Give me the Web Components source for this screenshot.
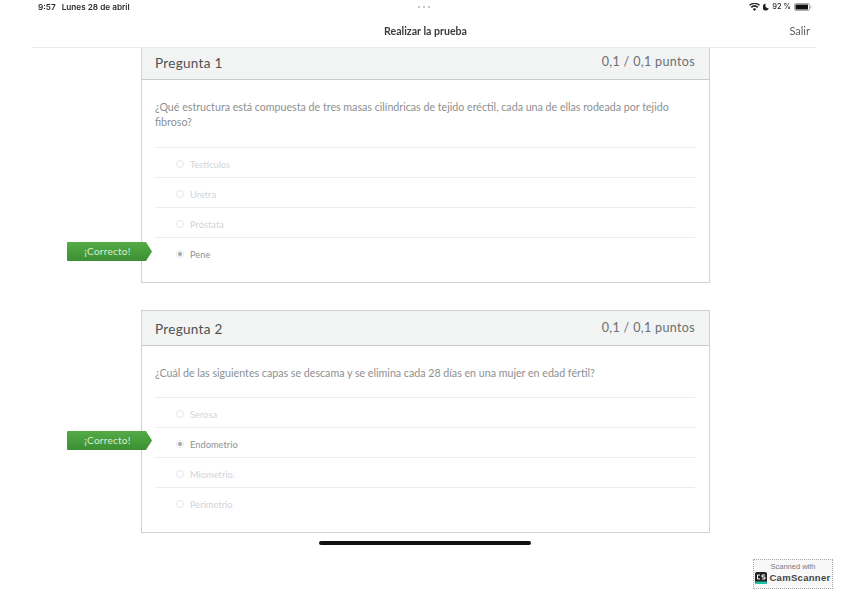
<!DOCTYPE html>
<html lang="es">
<head>
<meta charset="utf-8">
<title>Realizar la prueba</title>
<style>
  html, body { margin: 0; background: #fff; }
  body { width: 848px; height: 599px; overflow: hidden; position: relative; font-family: Lato, "Liberation Sans", sans-serif; }
</style>
</head>
<body>
<quiz-app></quiz-app>

<template id="status-tpl">
  <style>
    :host { display: flex; align-items: center; height: 13px; margin-bottom: 1px; padding: 0 36px 0 38px; font: 600 8.200px/12px Inter, "Liberation Sans", sans-serif; color: #2a2a2a; position: relative; }
    .date { margin-left: 6px; }
    .dots { position: absolute; left: 418px; top: 6px; display: flex; gap: 3px; }
    .dots i { width: 2px; height: 2px; border-radius: 50%; background: #b5b5b5; }
    .right { margin-left: auto; display: flex; align-items: center; gap: 3px; font-size: 7.500px; font-weight: 500; }
    svg { display: block; }
  </style>
  <span>9:57</span><span class="date">Lunes 28 de abril</span>
  <div class="dots"><i></i><i></i><i></i></div>
  <div class="right">
    <svg width="11" height="8" viewBox="0 0 11 8"><path d="M5.500 8 3.700 5.900a2.800 2.800 0 0 1 3.600 0ZM2.800 4.900 1.700 3.700a5.900 5.900 0 0 1 7.600 0L8.200 4.900a4.300 4.300 0 0 0-5.400 0ZM.9 2.800 0 1.800a8.400 8.400 0 0 1 11 0l-.9 1a7 7 0 0 0-9.200 0Z" fill="#222"/></svg>
    <svg width="6" height="8" viewBox="0 0 7 8"><path d="M3.300.3A3.900 3.900 0 1 0 6.900 5.700 3.600 3.600 0 0 1 3.300.3Z" fill="#222"/></svg>
    <span>92 %</span>
    <svg width="18" height="8" viewBox="0 0 18 8"><rect x=".5" y=".5" width="15" height="7" rx="1.500" fill="none" stroke="#aaa"/><rect x="1.500" y="1.500" width="12.500" height="5" fill="#111"/><rect x="16.300" y="2.800" width="1" height="2.400" fill="#bbb"/></svg>
  </div>
</template>

<template id="nav-tpl">
  <style>
    :host { display: grid; grid-template-columns: 1fr auto 1fr; align-items: center; height: 34px; margin: 0 32px; border-bottom: 1px solid #e9e9e9; box-sizing: border-box; padding: 0 0 0 3px; font: 10.600px Lato, "Liberation Sans", sans-serif; }
    .title { grid-column: 2; font-weight: 700; color: #3c3c3c; }
    .exit { justify-self: end; margin-right: 6px; font-size: 11px; color: #5e5e5e; }
  </style>
  <span class="title"><slot name="title"></slot></span>
  <span class="exit"><slot name="exit"></slot></span>
</template>

<template id="card-tpl">
  <style>
    :host { display: block; width: 569px; box-sizing: border-box; margin-left: 141px; border: 1px solid #cfd2d2; border-top-width: var(--top-border, 1px); position: relative; background: #fff; }
    header { display: flex; justify-content: space-between; align-items: center; box-sizing: border-box; height: var(--head, 35px); padding: var(--head-pad, 4px) 14px 0 13px; background: #f2f3f3; border-bottom: 1px solid #c9cccc; letter-spacing: .35px; color: #565a5c; }
    h2 { margin: -2px 0 0; font: 400 13.500px Lato, "Liberation Sans", sans-serif; letter-spacing: .3px; color: #4d5153; }
    .pts { font-size: 12.500px; margin-top: -5px; color: #6b6f71; }
    .q { margin: 0; padding: var(--q-pad, 19px) 26px 0 13px; min-height: var(--q-h, 32px); font-size: 10.660px; line-height: 15px; color: #8c9091; }
    .rows { margin: 0 14px 0 13px; padding-bottom: 15px; }
  </style>
  <header><h2><slot name="title"></slot></h2><span class="pts"><slot name="points"></slot></span></header>
  <p class="q"><slot name="question"></slot></p>
  <div class="rows"><slot></slot></div>
</template>

<template id="option-tpl">
  <style>
    :host { display: flex; align-items: center; gap: 6px; height: 30px; padding: 3px 0 0 21px; box-sizing: border-box; border-top: 1px solid #ececec; font-size: 9.300px; color: #d2d5d6; }
    :host([selected]) { color: #8f9294; }
    .r { width: 8px; height: 8px; box-sizing: border-box; border-radius: 50%; border: 1px solid #e6e7e7; display: grid; place-items: center; }
    :host([selected]) .r::after { content: ""; width: 4px; height: 4px; border-radius: 50%; background: #a3a5a7; }
  </style>
  <span class="r"></span><slot></slot>
</template>

<template id="flag-tpl">
  <style>
    :host { display: block; position: absolute; left: 67px; width: 85px; height: 19px; color: #dcecd5; font: 10px/19px Lato, "Liberation Sans", sans-serif; letter-spacing: .25px; text-align: center; }
    .b { width: 85px; height: 19px; box-sizing: border-box; padding-right: 4px; background: linear-gradient(#55ab45, #3a9033); clip-path: polygon(0 0, 79px 0, 85px 9.500px, 79px 19px, 0 19px); border-radius: 1px; }
  </style>
  <div class="b"><slot></slot></div>
</template>

<template id="badge-tpl">
  <style>
    :host { display: block; position: absolute; left: 753px; top: 559px; width: 80px; height: 30px; box-sizing: border-box; border: 1px dotted #a9a9a9; background: #f8f8f8; text-align: center; font-family: "Liberation Sans", sans-serif; color: #7b7b7b; }
    .s { font-size: 7.500px; line-height: 9px; margin-top: 2px; }
    .c { display: flex; align-items: center; justify-content: center; gap: 2px; font: 700 9.500px/13px "Liberation Sans", sans-serif; letter-spacing: .3px; color: #444; }
    svg { display: block; }
  </style>
  <div class="s">Scanned with</div>
  <div class="c">
    <svg width="12" height="12" viewBox="0 0 12 12"><rect width="12" height="12" rx="2" fill="#222"/><rect y="9.500" width="12" height="2.500" rx="1" fill="#1fbf9f"/><path d="M5 3H2.500v4H5M10 3H7v2h3v2H7" fill="none" stroke="#fff" stroke-width="1"/></svg>
    <span>CamScanner</span>
  </div>
</template>

<template id="app-tpl">
  <style>
    :host { display: block; width: 848px; height: 599px; filter: blur(.45px); font-family: Lato, "Liberation Sans", sans-serif; }
    .c1 { --head: 32px; --head-pad: 0px; --top-border: 0px; --q-pad: 19px; --q-h: 48px; }
    .c2 { --head: 35px; --q-pad: 19px; --q-h: 32px; margin-top: 27px; }
    .home { width: 212px; height: 4px; border-radius: 2px; background: #111; margin: 8px 0 0 319px; }
  </style>
  <status-bar></status-bar>
  <nav-bar><span slot="title">Realizar la prueba</span><span slot="exit">Salir</span></nav-bar>
  <quiz-card class="c1">
    <span slot="title">Pregunta 1</span>
    <span slot="points">0,1 / 0,1 puntos</span>
    <span slot="question">¿Qué estructura está compuesta de tres masas cilíndricas de tejido eréctil, cada una de ellas rodeada por tejido fibroso?</span>
    <quiz-option>Testículos</quiz-option>
    <quiz-option>Uretra</quiz-option>
    <quiz-option>Próstata</quiz-option>
    <quiz-option selected>Pene</quiz-option>
  </quiz-card>
  <quiz-card class="c2">
    <span slot="title">Pregunta 2</span>
    <span slot="points">0,1 / 0,1 puntos</span>
    <span slot="question">¿Cuál de las siguientes capas se descama y se elimina cada 28 días en una mujer en edad fértil?</span>
    <quiz-option>Serosa</quiz-option>
    <quiz-option selected>Endometrio</quiz-option>
    <quiz-option>Miometrio.</quiz-option>
    <quiz-option>Perimetrio</quiz-option>
  </quiz-card>
  <correct-flag style="top:242px">¡Correcto!</correct-flag>
  <correct-flag style="top:431px">¡Correcto!</correct-flag>
  <div class="home"></div>
  <scan-badge></scan-badge>
</template>

<script>
// every element just clones its own template into an open shadow root
function register(name, tplId) {
  customElements.define(name, class extends HTMLElement {
    constructor() {
      super();
      this.attachShadow({ mode: 'open' });
      this.shadowRoot.appendChild(document.getElementById(tplId).content.cloneNode(true));
    }
  });
}

register('status-bar', 'status-tpl');
register('nav-bar', 'nav-tpl');
register('quiz-card', 'card-tpl');
register('quiz-option', 'option-tpl');
register('correct-flag', 'flag-tpl');
register('scan-badge', 'badge-tpl');
register('quiz-app', 'app-tpl');
</script>
</body>
</html>
